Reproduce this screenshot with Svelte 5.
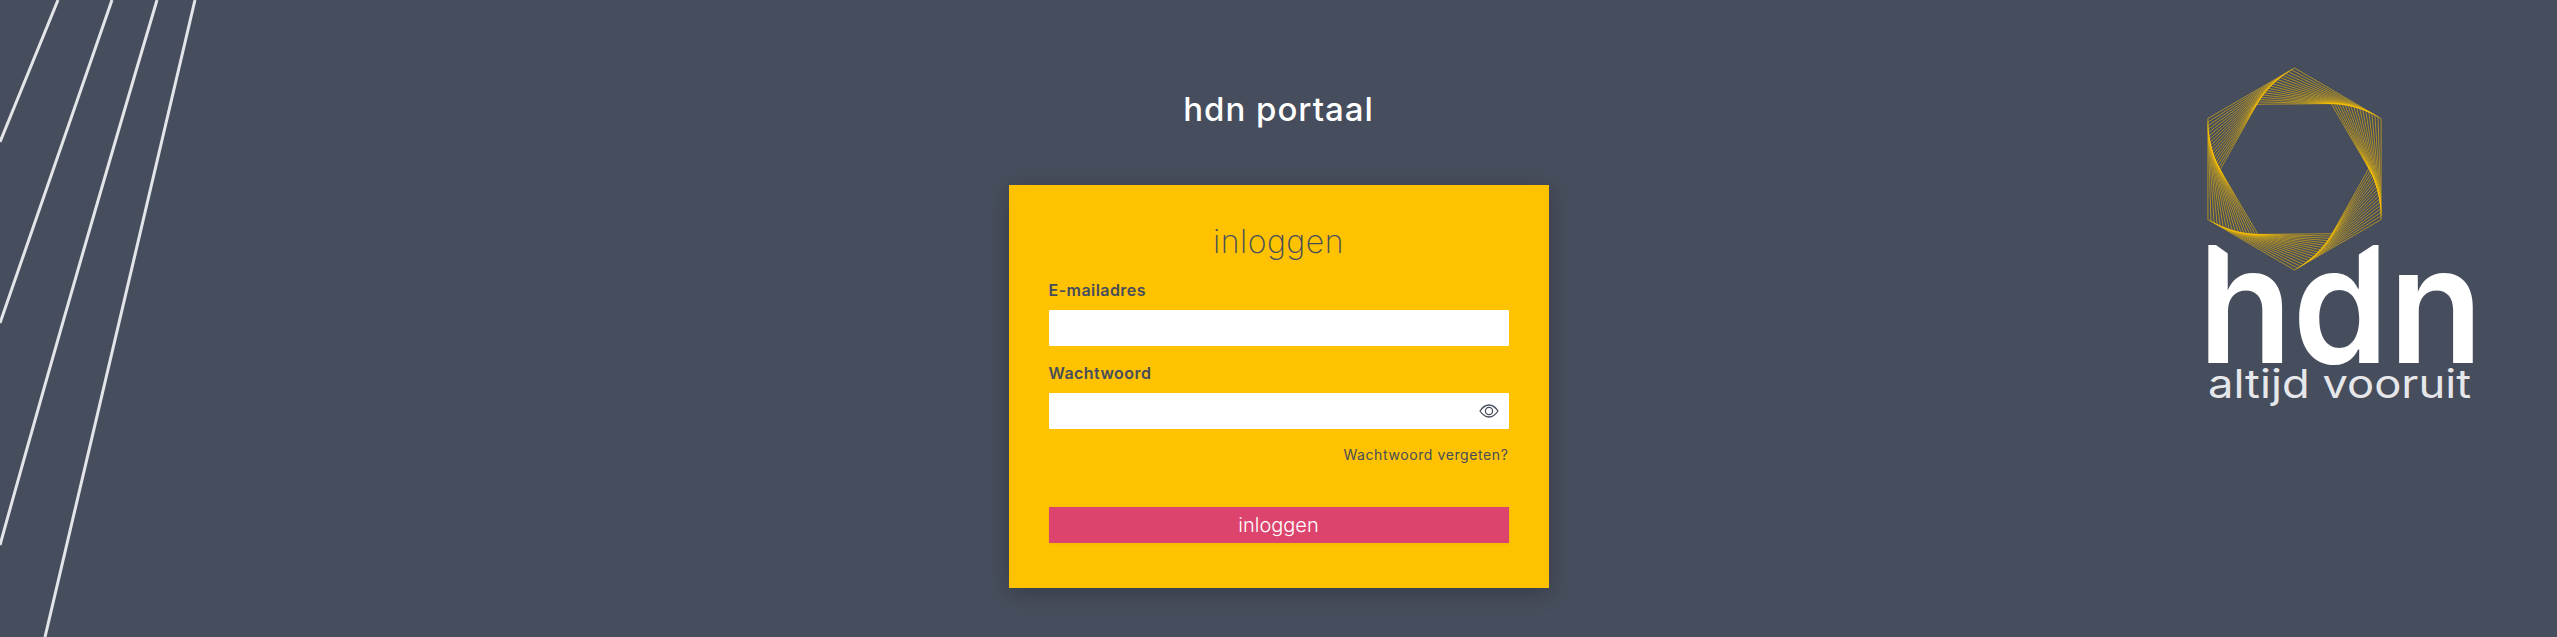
<script>
  const bg = "#464d5c";

  // twisted hexagons: each one sits on the edges of the one before it
  function hexagons(count, step) {
    let pts = [];
    for (let i = 0; i < 6; i++) {
      const a = (-90 + i * 60) * Math.PI / 180;
      pts.push([86.5 + 100 * Math.cos(a), 101 + 101 * Math.sin(a)]);
    }
    const out = [];
    for (let k = 0; k <= count; k++) {
      out.push(pts.map((p) => p[0].toFixed(2) + "," + p[1].toFixed(2)).join(" "));
      pts = pts.map((p, i) => {
        const next = pts[(i + 5) % 6];
        return [p[0] + (next[0] - p[0]) * step, p[1] + (next[1] - p[1]) * step];
      });
    }
    return out;
  }

  const rings = hexagons(17, 0.0355);
</script>

<div class="page">
  <svg class="lines" width="200" height="637" viewBox="0 0 200 637" aria-hidden="true">
    <path d="M58 0 L0 142" />
    <path d="M112 0 L0 323" />
    <path d="M157 0 Q70 293 0 545" />
    <path d="M195 0 Q128 285 45 637" />
  </svg>

  <div class="side"></div>

  <main class="center">
    <h1 class="title">hdn portaal</h1>
    <form class="card">
      <h2 class="heading">inloggen</h2>
      <label class="label" for="email">E-mailadres</label>
      <input class="input" id="email" type="email" />
      <label class="label second" for="password">Wachtwoord</label>
      <div class="password">
        <input class="input" id="password" type="password" />
        <svg class="eye" width="20" height="14" viewBox="0 0 20 14" fill="none" stroke={bg} stroke-width="1.3">
          <path d="M1 7 C4 2.6 7 1 10 1 C13 1 16 2.6 19 7 C16 11.4 13 13 10 13 C7 13 4 11.4 1 7 Z" />
          <circle cx="10" cy="7" r="3.6" />
        </svg>
      </div>
      <a class="forgot" href="#forgot">Wachtwoord vergeten?</a>
      <button class="submit" type="button">inloggen</button>
    </form>
  </main>

  <div class="side logo-wrap">
    <svg class="logo" width="264" height="345" viewBox="0 0 264 345" role="img" aria-label="hdn altijd vooruit">
      <g fill="none" stroke="#ffc300">
        {#each rings as ring}
          <polygon points={ring} stroke-width="0.8" stroke-opacity="0.7" />
        {/each}
      </g>
      <text class="logo-hdn" x="-10" y="295" textLength="285" lengthAdjust="spacingAndGlyphs">hdn</text>
      <g fill={bg}>
        <polygon points="-2,170 22,170 22,187" />
        <polygon points="150,187 150,170 176,170" />
      </g>
      <text class="logo-sub" x="0" y="330" textLength="263" lengthAdjust="spacingAndGlyphs">altijd vooruit</text>
    </svg>
  </div>
</div>

<style>
  :global(body) {
    margin: 0;
    background: #464d5c;
  }

  .page {
    position: relative;
    display: grid;
    grid-template-columns: 1fr 540px 1fr;
    height: 637px;
    overflow: hidden;
    background: #464d5c;
    font-family: Inter, "Liberation Sans", sans-serif;
    color: #464d5c;
  }

  .lines {
    position: absolute;
    left: 0;
    top: 0;
  }

  .lines path {
    fill: none;
    stroke: #e3e5e8;
    stroke-width: 3;
  }

  .center {
    display: flex;
    flex-direction: column;
  }

  .title {
    margin: 88px 0 0;
    height: 97px;
    font-size: 33px;
    line-height: 42px;
    font-weight: 450;
    letter-spacing: 1px;
    text-align: center;
    color: #fff;
  }

  .card {
    display: flex;
    flex-direction: column;
    height: 403px;
    box-sizing: border-box;
    padding: 40px 40px 0;
    background: #ffc200;
    box-shadow: 0 5px 20px rgba(0, 0, 0, 0.22);
  }

  .heading {
    margin: 0;
    font-size: 32px;
    line-height: 34px;
    font-weight: 200;
    text-align: center;
    letter-spacing: 0.5px;
  }

  .label {
    margin: 22px 0 11px;
    font-size: 16px;
    line-height: 18px;
    font-weight: 600;
    letter-spacing: 0.45px;
  }

  .label.second {
    margin-top: 18px;
  }

  .input {
    display: block;
    width: 100%;
    height: 36px;
    box-sizing: border-box;
    padding: 0 10px;
    border: none;
    border-radius: 1px;
    outline: none;
    background: #fff;
  }

  .password {
    position: relative;
  }

  .eye {
    position: absolute;
    right: 10px;
    top: 11px;
  }

  .forgot {
    margin-top: 17px;
    font-size: 14px;
    line-height: 18px;
    letter-spacing: 0.6px;
    text-align: right;
    text-decoration: none;
    color: #464d5c;
  }

  .submit {
    margin-top: 43px;
    height: 36px;
    padding: 0;
    border: none;
    background: #dc446e;
    box-shadow: 0 2px 3px rgba(0, 0, 0, 0.04);
    font-family: inherit;
    font-size: 20px;
    font-weight: 300;
    color: #fff;
  }

  .logo-wrap {
    display: flex;
    justify-content: flex-end;
    padding: 68px 85px 0 0;
  }

  .logo {
    overflow: visible;
  }

  .logo-hdn {
    font-size: 162px;
    font-weight: 600;
    fill: #fff;
  }

  .logo-sub {
    font-size: 39px;
    font-weight: 400;
    fill: #e6e7ea;
  }
</style>
